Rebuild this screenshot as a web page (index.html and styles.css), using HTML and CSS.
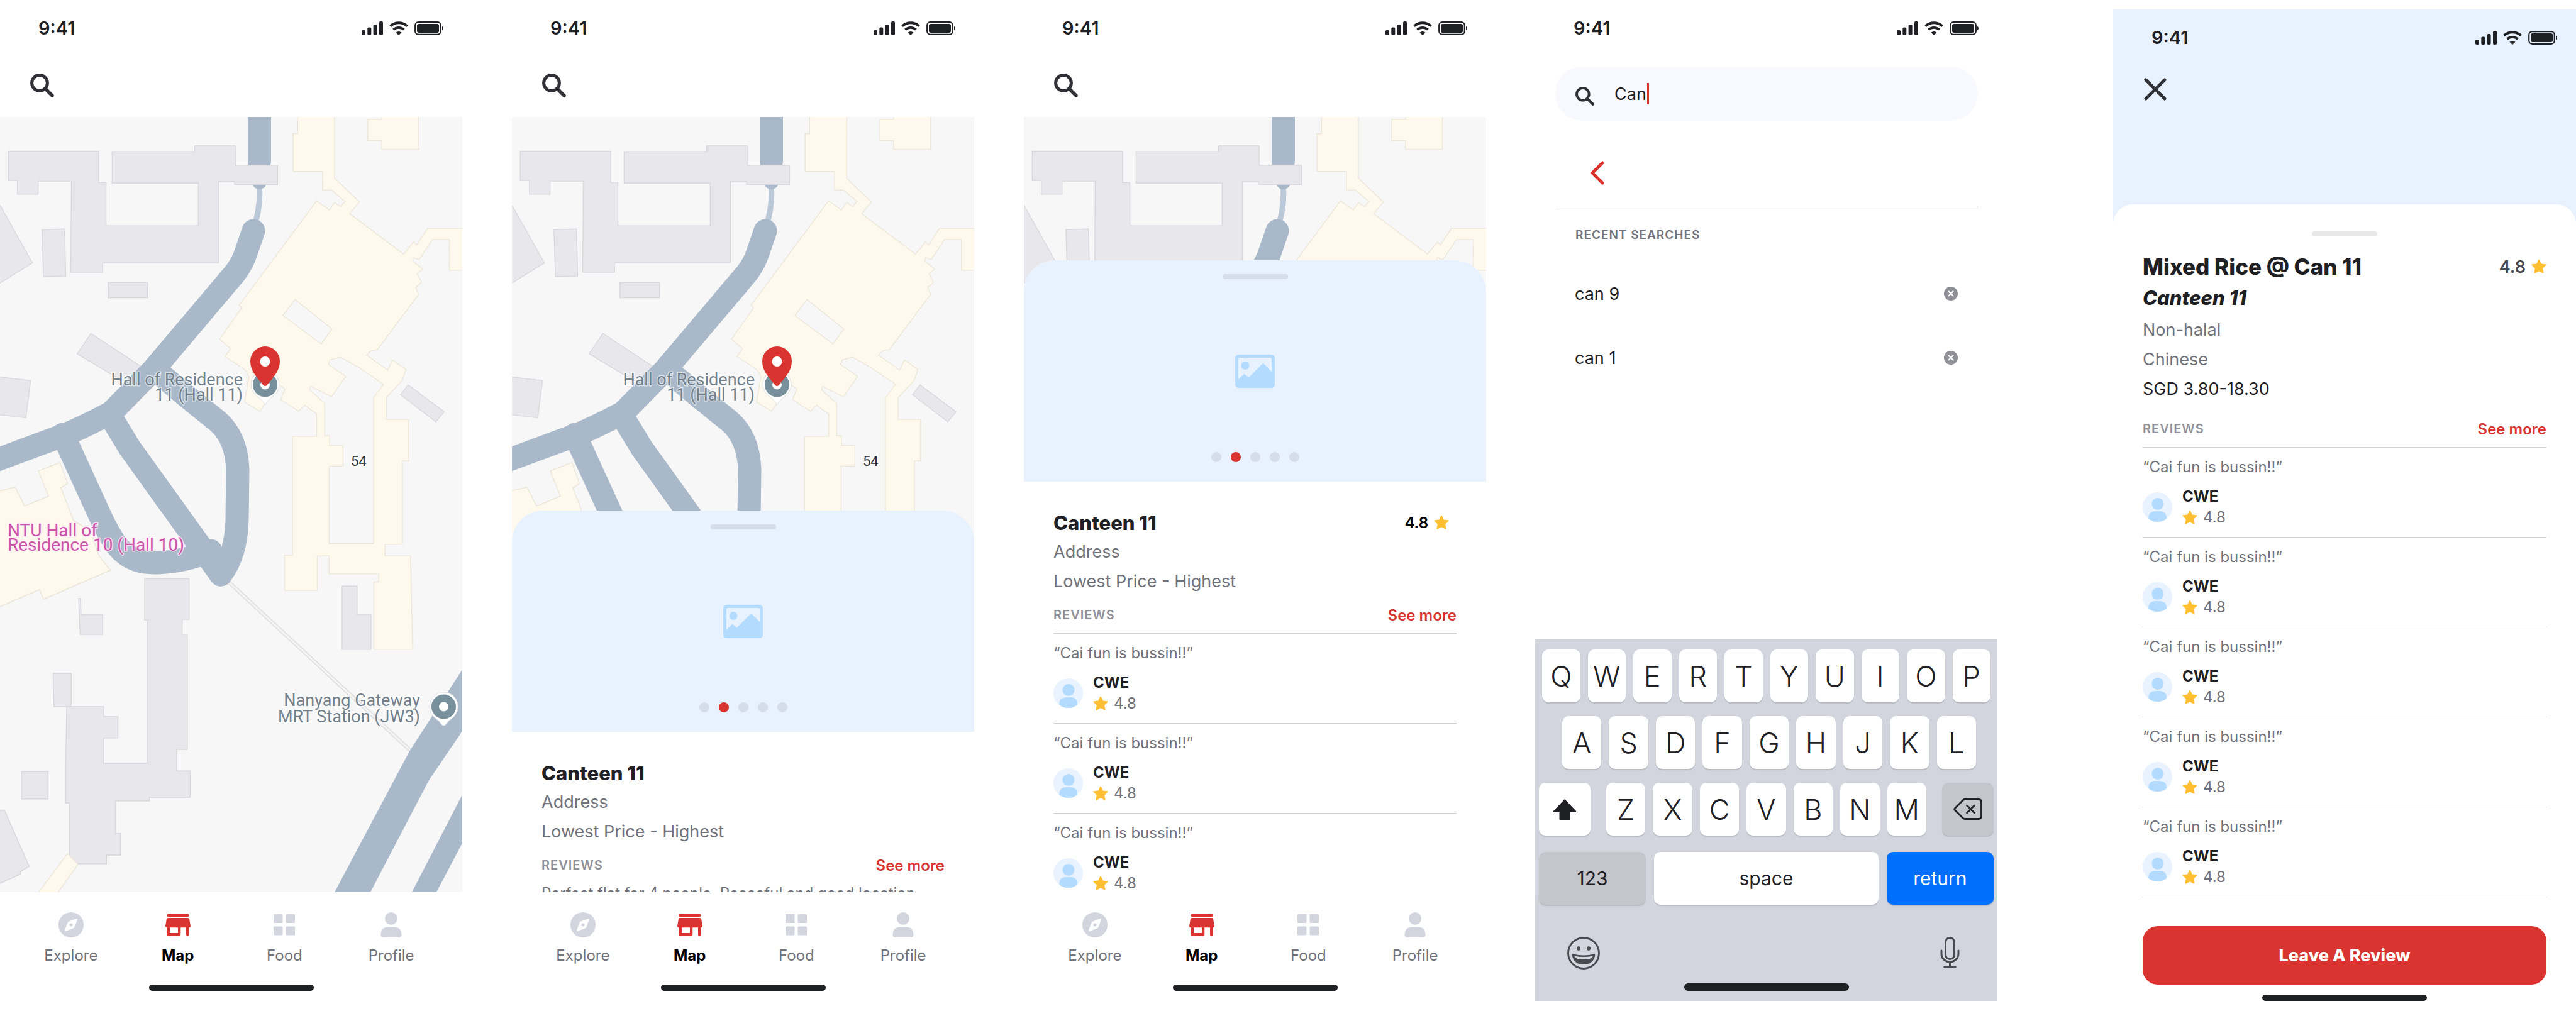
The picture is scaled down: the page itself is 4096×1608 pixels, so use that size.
FILE: index.html
```html
<!DOCTYPE html>
<html lang="en">
<head>
<meta charset="utf-8">
<title>Canteen finder – screens</title>
<link rel="stylesheet" href="styles.css">
</head>
<body>
<svg class="defs" aria-hidden="true">
  <symbol id="i-signal" viewBox="0 0 34 22"><rect x="0" y="14" width="6" height="8" rx="2"/><rect x="9.300000" y="9.500000" width="6" height="12.500000" rx="2"/><rect x="18.600000" y="5" width="6" height="17" rx="2"/><rect x="28" y="0" width="6" height="22" rx="2"/></symbol>
  <symbol id="i-wifi" viewBox="0 0 30 22"><path d="M1.500000 7.500000A20 20 0 0 1 28.500000 7.500000M6.500000 13.200000A12.500000 12.500000 0 0 1 23.500000 13.200000" fill="none" stroke="currentColor" stroke-width="3.800000"/><path d="M15 22l-4.500000-4.200000a6.500000 6.500000 0 0 1 9 0z"/></symbol>
  <symbol id="i-battery" viewBox="0 0 48 22"><rect x="1.200000" y="1.200000" width="40.600000" height="19.600000" rx="5" fill="none" stroke="currentColor" stroke-width="2.200000"/><rect x="4" y="4" width="35" height="14" rx="3"/><path d="M44 7.500000q4 3.500000 0 7z"/></symbol>
  <symbol id="i-search" viewBox="0 0 38 38"><circle cx="15" cy="15" r="12.400000" fill="none" stroke="currentColor" stroke-width="5"/><path d="M24 24L35 35" stroke="currentColor" stroke-width="5.500000" stroke-linecap="round"/></symbol>
  <symbol id="i-star" viewBox="0 0 24 24"><path d="M11 1.500000q1-1.600000 2 0l2.700000 6 6.700000.8q1.800000.4.7 1.800000l-4.900000 4.600000 1.300000 6.600000q.1 1.900000-1.600000 1.200000L12 19.200000l-5.900000 3.300000q-1.700000.7-1.600000-1.200000l1.300000-6.600000L.9 10.100000q-1.100000-1.400000.7-1.800000l6.700000-.8z"/></symbol>
  <symbol id="i-compass" viewBox="0 0 40 40"><path fill-rule="evenodd" d="M20 0a20 20 0 1 1 0 40a20 20 0 1 1 0-40zM28.500000 10L16.500000 14.500000Q15 15 14.500000 16.500000L10 28.500000Q9.600000 30.400000 11.500000 30L23.500000 25.500000Q25 25 25.500000 23.500000L30 11.500000Q30.400000 9.600000 28.500000 10zM20 17.400000a2.600000 2.600000 0 1 1 0 5.200000a2.600000 2.600000 0 1 1 0-5.200000z"/></symbol>
  <symbol id="i-store" viewBox="0 0 40 40"><rect x="2.500000" y="2.500000" width="35" height="4.500000" rx="2"/><path fill-rule="evenodd" d="M4 9H36Q37.500000 9 38 10.500000L40 22Q40 24.300000 37.500000 24.300000V35.500000Q37.500000 37.500000 35.300000 37.500000T33 35.500000V24.300000H24.300000V35.500000Q24.300000 37.500000 22.300000 37.500000H5Q2.500000 37.500000 2.500000 35V24.300000Q0 24.300000 0 22L2 10.500000Q2.500000 9 4 9zM7 24.300000V33H20V24.300000z"/></symbol>
  <symbol id="i-grid" viewBox="0 0 40 40"><rect x="3" y="3" width="14.500000" height="14" rx="1.500000"/><rect x="22.500000" y="3" width="14.500000" height="14" rx="1.500000"/><rect x="3" y="22.500000" width="14.500000" height="14" rx="1.500000"/><rect x="22.500000" y="22.500000" width="14.500000" height="14" rx="1.500000"/></symbol>
  <symbol id="i-person" viewBox="0 0 40 40"><circle cx="20" cy="10" r="10"/><path d="M14 23.500000H26Q36.500000 24.500000 36.500000 35Q36.500000 40 32 40H8Q3.500000 40 3.500000 35Q3.500000 24.500000 14 23.500000z"/></symbol>
  <symbol id="i-picture" viewBox="0 0 63 53"><path fill-rule="evenodd" d="M6 0H57Q63 0 63 6V47Q63 53 57 53H6Q0 53 0 47V6Q0 0 6 0zM7 5Q5 5 5 7V39.500000L14.500000 30.500000L21.500000 36.500000L44.500000 13.500000L58 27V7Q58 5 56 5z"/><circle cx="16" cy="17.500000" r="6.500000"/></symbol>
  <symbol id="i-avatar" viewBox="0 0 47 47"><circle cx="23.500000" cy="23.500000" r="23.500000" fill="#e9f2ff"/><circle cx="24" cy="18.500000" r="9.500000" fill="#b3daff"/><path d="M9.300000 42V40Q10 30 20 30H28Q38 31 38 40V42Q32 47 23.500000 47T9.300000 42z" fill="#b3daff"/></symbol>
  <symbol id="i-clear" viewBox="0 0 22 22"><circle cx="11" cy="11" r="11" fill="#8f9098"/><path d="M7.500000 7.500000l7 7m0-7l-7 7" stroke="#fff" stroke-width="2.200000" stroke-linecap="round"/></symbol>

  <symbol id="campus-map" viewBox="0 0 735 1233" preserveAspectRatio="xMidYMin slice">
    <rect width="735" height="1233" fill="#f7f7f7"/>
    <g transform="translate(0 -186) scale(.47717 .45015)" fill="#e8e8ec" stroke="#d8d8de" stroke-width="3">
      <path d="M0 725L108 929L0 1000M0 1332L102 1345L86 1476L0 1466"/>
      <path d="M140 812L215 809L219 975L145 977zM360 998H492V1052H360zM303 1178L470 1295L420 1350L370 1322L257 1250zM1360 1360L1480 1455L1452 1490L1335 1395z"/>
      <g fill="#fef9ec" stroke="#ece7da">
        <path fill-rule="evenodd" d="M992 400H1115V630L1198 714L1165 755L1345 898L1378 855L1388 866L1425 807H1560V955H1498V846H1442L1396 918L1378 910L1375 922L1408 950L1390 967L1405 998L1385 1015L1395 1040L1258 1235L1235 1240L1222 1255L1292 1308L1308 1272L1353 1305L1340 1345L1287 1405V1482H1362V1629H1341V1923H1283V1964H1368L1375 2294H1246V2056H1262V2028H1097V1964H1057V2086H948V1962H975V1542H1055V1462L1015 1432L995 1453L935 1412L950 1375L930 1360L865 1453L815 1420L830 1330L815 1305L750 1260L768 1232L732 1198L805 1088L797 1078L1055 710L1098 742L1115 715L1135 730L1150 712L1105 672H1075V606H977V472H992zM1278 1358L1195 1298L1135 1262L1100 1272L1095 1288L1152 1330L1105 1402L1035 1365L1032 1378L1082 1425V1540H1098V1574H1143V1647H1097V1921H1245V1405zM983 1058L1106 1162L1070 1215L943 1115z"/>
        <path d="M1226 422H1272V400H1395V528H1272V497H1226z"/>
      </g>
    </g>
    <g transform="translate(0 519.800000) scale(.47717 .57531)" fill="#e8e8ec" stroke="#d8d8de" stroke-width="3">
      <path d="M482 373H630V485H607V527H624V845H589V905H634V977H498V987H385V1078H401V1137H355V1161H231V993H219V905L222 727H345V755H393V813H345V883H490V487H482zM177 635H237V727H180zM262 428H268L270 472H342V527H267zM72 906H160V982H72zM-5 1013H15L97 1168L68 1183V1190L-5 1217zM1140 394H1190V471H1236V568H1140z"/>
      <path fill="#fef9ec" stroke="#ece7da" d="M-5 131L50 120L82 172L162 145L128 75L200 52L225 110L203 122L245 212L300 240L330 310L368 350L145 430L132 403L-5 452zM120 1250L225 1133L260 1163L185 1250z"/>
    </g>
    <path d="M365 741L654 1009" stroke="#dedede" stroke-width="6"/><path d="M365 741L654 1009" stroke="#f4f4f4" stroke-width="3"/>
    <path d="M412 108Q415 135 407 165" fill="none" stroke="#bac8d7" stroke-width="9"/>
    <g fill="none" stroke="#a9b9ca" stroke-width="37" stroke-linecap="round" stroke-linejoin="round">
      <path d="M412.500000-20V70"/>
      <path d="M403 181L391 216Q386 232 374 248L243 403L177 470Q120 500 91 510L-20 551"/>
      <path d="M250 405L300 447L346 484Q376 510 378 560L377 640Q376 695 351 728"/>
      <path d="M178 480L206 526L351 728"/>
      <path d="M100 505L158 632Q180 680 197 693Q215 709 245 709Q290 709 335 690"/>
    </g>
    <path d="M401 107h23q-4 8-11.500000 8t-11.500000-8zM735 879L651 1009L532 1233H589L682 1055L735 977zM735 1078L655 1233H694L735 1155z" fill="#a9b9ca"/>
    <path transform="translate(0 -186) scale(.47717 .45015)" d="M28 534H329V645H353V798H661V647H374V536H649V515H784V584H925V652H782V642H728V929H342V962H236L238 640H127V686H58V638H28z" fill="#e8e8ec" stroke="#d8d8de" stroke-width="3"/>
    <g fill="#fff"><path d="M421.500000 403a22.500000 22.500000 0 0 1 22.500000 23q0 12-12 20-7 5-10.500000 12-3.500000-7-10.500000-12-12-8-12-20a22.500000 22.500000 0 0 1 22.500000-23z" stroke="#dfe0e2"/><path d="M705.500000 915a22.500000 22.500000 0 0 1 22.500000 23q0 12-10 19-6 4-8 8-4.500000 6-9 0-2-4-8-8-10-7-10-19a22.500000 22.500000 0 0 1 22.500000-23z" stroke="#dfe4e8"/></g>
    <g fill="#fff" stroke="#78909c" stroke-width="12"><circle cx="421.500000" cy="426" r="13.500000"/><circle cx="705.500000" cy="938" r="13.500000"/></g>
    <path fill="#d9342f" d="M421.500000 365a23.500000 23.500000 0 0 1 23.500000 23.500000C445 403 436 413 424.500000 426.500000q-3 3-6 0C407 413 398 403 398 388.500000a23.500000 23.500000 0 0 1 23.500000-23.500000z"/>
    <circle cx="421.500000" cy="389" r="8" fill="#fff"/>
    <g class="map-text">
      <g class="map-place" text-anchor="end"><text x="386" y="427">Hall of Residence</text><text x="386" y="451">11 (Hall 11)</text><text x="668" y="937">Nanyang Gateway</text><text x="668" y="963">MRT Station (JW3)</text></g>
      <g class="map-hall"><text x="12" y="667">NTU Hall of</text><text x="12" y="690">Residence 10 (Hall 10)</text></g>
      <text class="map-number" x="558" y="555">54</text>
    </g>
  </symbol>
</svg>

<main class="board">
  <section class="phone" aria-label="Map">
    <div class="status"><span>9:41</span><span class="status-icons"><svg class="signal"><use href="#i-signal"/></svg><svg class="wifi"><use href="#i-wifi"/></svg><svg class="battery"><use href="#i-battery"/></svg></span></div>
    <div class="toolbar"><button class="icon-button" aria-label="Search"><svg><use href="#i-search"/></svg></button></div>
    <div class="stage"><svg class="map" viewBox="0 0 735 1233"><use href="#campus-map"/></svg></div>
    <nav class="tabs">
      <a href="#explore"><svg><use href="#i-compass"/></svg>Explore</a>
      <a href="#map" class="current"><svg><use href="#i-store"/></svg>Map</a>
      <a href="#food"><svg><use href="#i-grid"/></svg>Food</a>
      <a href="#profile"><svg><use href="#i-person"/></svg>Profile</a>
    </nav>
    <div class="home-bar"></div>
  </section>

  <section class="phone" aria-label="Map with preview">
    <div class="status"><span>9:41</span><span class="status-icons"><svg class="signal"><use href="#i-signal"/></svg><svg class="wifi"><use href="#i-wifi"/></svg><svg class="battery"><use href="#i-battery"/></svg></span></div>
    <div class="toolbar"><button class="icon-button" aria-label="Search"><svg><use href="#i-search"/></svg></button></div>
    <div class="stage">
      <svg class="map" viewBox="0 0 735 1233"><use href="#campus-map"/></svg>
      <article class="sheet sheet-low">
        <div class="hero"><span class="handle"></span><svg class="picture"><use href="#i-picture"/></svg><div class="dots"><i></i><i class="on"></i><i></i><i></i><i></i></div></div>
        <div class="details">
          <div class="title-row"><h2>Canteen 11</h2></div>
          <p class="fact">Address</p>
          <p class="fact">Lowest Price - Highest</p>
          <div class="reviews-head no-rule"><h3>Reviews</h3><a href="#reviews">See more</a></div>
          <p class="quote">Perfect flat for 4 people. Peaceful and good location.</p>
        </div>
      </article>
    </div>
    <nav class="tabs">
      <a href="#explore"><svg><use href="#i-compass"/></svg>Explore</a>
      <a href="#map" class="current"><svg><use href="#i-store"/></svg>Map</a>
      <a href="#food"><svg><use href="#i-grid"/></svg>Food</a>
      <a href="#profile"><svg><use href="#i-person"/></svg>Profile</a>
    </nav>
    <div class="home-bar"></div>
  </section>

  <section class="phone" aria-label="Canteen details">
    <div class="status"><span>9:41</span><span class="status-icons"><svg class="signal"><use href="#i-signal"/></svg><svg class="wifi"><use href="#i-wifi"/></svg><svg class="battery"><use href="#i-battery"/></svg></span></div>
    <div class="toolbar"><button class="icon-button" aria-label="Search"><svg><use href="#i-search"/></svg></button></div>
    <div class="stage">
      <svg class="map" viewBox="0 0 735 1233"><use href="#campus-map"/></svg>
      <article class="sheet sheet-high">
        <div class="hero"><span class="handle"></span><svg class="picture"><use href="#i-picture"/></svg><div class="dots"><i></i><i class="on"></i><i></i><i></i><i></i></div></div>
        <div class="details">
          <div class="title-row"><h2>Canteen 11</h2><span class="score inset">4.8<svg class="star"><use href="#i-star"/></svg></span></div>
          <p class="fact">Address</p>
          <p class="fact">Lowest Price - Highest</p>
          <div class="reviews-head"><h3>Reviews</h3><a href="#reviews">See more</a></div>
          <ul class="reviews">
            <li><p class="quote">“Cai fun is bussin!!”</p><div class="reviewer"><svg class="avatar"><use href="#i-avatar"/></svg><div><b>CWE</b><span><svg class="star"><use href="#i-star"/></svg>4.8</span></div></div></li>
            <li><p class="quote">“Cai fun is bussin!!”</p><div class="reviewer"><svg class="avatar"><use href="#i-avatar"/></svg><div><b>CWE</b><span><svg class="star"><use href="#i-star"/></svg>4.8</span></div></div></li>
            <li><p class="quote">“Cai fun is bussin!!”</p><div class="reviewer"><svg class="avatar"><use href="#i-avatar"/></svg><div><b>CWE</b><span><svg class="star"><use href="#i-star"/></svg>4.8</span></div></div></li>
          </ul>
        </div>
      </article>
    </div>
    <nav class="tabs">
      <a href="#explore"><svg><use href="#i-compass"/></svg>Explore</a>
      <a href="#map" class="current"><svg><use href="#i-store"/></svg>Map</a>
      <a href="#food"><svg><use href="#i-grid"/></svg>Food</a>
      <a href="#profile"><svg><use href="#i-person"/></svg>Profile</a>
    </nav>
    <div class="home-bar"></div>
  </section>

  <section class="phone search-phone" aria-label="Search">
    <div class="status"><span>9:41</span><span class="status-icons"><svg class="signal"><use href="#i-signal"/></svg><svg class="wifi"><use href="#i-wifi"/></svg><svg class="battery"><use href="#i-battery"/></svg></span></div>
    <label class="search-field"><svg><use href="#i-search"/></svg><input type="text" value="Can" aria-label="Search"><span class="caret"></span></label>
    <div class="back-row"><button class="back" aria-label="Back"><svg viewBox="0 0 24 38"><path d="M21 3L5 19L21 35" fill="none" stroke="currentColor" stroke-width="5" stroke-linecap="round"/></svg></button></div>
    <h3 class="recent-title">Recent searches</h3>
    <ul class="recent">
      <li>can 9<button class="clear" aria-label="Remove can 9"><svg><use href="#i-clear"/></svg></button></li>
      <li>can 1<button class="clear" aria-label="Remove can 1"><svg><use href="#i-clear"/></svg></button></li>
    </ul>
    <div class="keyboard">
      <div class="keys keys-top"><button>Q</button><button>W</button><button>E</button><button>R</button><button>T</button><button>Y</button><button>U</button><button>I</button><button>O</button><button>P</button></div>
      <div class="keys keys-home"><button>A</button><button>S</button><button>D</button><button>F</button><button>G</button><button>H</button><button>J</button><button>K</button><button>L</button></div>
      <div class="keys-shift">
        <button aria-label="Shift"><svg class="shift" viewBox="0 0 38 33"><path d="M19 0L37 19Q38 21 36 21H27.500000V32Q27.500000 33 26.500000 33H11.500000Q10.500000 33 10.500000 32V21H2Q0 21 1 19z"/></svg></button>
        <div class="keys"><button>Z</button><button>X</button><button>C</button><button>V</button><button>B</button><button>N</button><button>M</button></div>
        <button class="dim" aria-label="Delete"><svg class="erase" viewBox="0 0 46 34" fill="none" stroke="currentColor" stroke-width="2.800000" stroke-linecap="round" stroke-linejoin="round"><path d="M18 1.500000H40Q44.500000 1.500000 44.500000 6V28Q44.500000 32.500000 40 32.500000H18Q16.500000 32.500000 15.500000 31.500000L2.500000 18.500000Q1 17 2.500000 15.500000L15.500000 2.500000Q16.500000 1.500000 18 1.500000zM21.500000 11L33.500000 23M33.500000 11L21.500000 23"/></svg></button>
      </div>
      <div class="keys-space"><button class="dim">123</button><button>space</button><button class="return">return</button></div>
      <div class="keyboard-foot">
        <svg class="emoji" viewBox="0 0 52 52"><circle cx="26" cy="26" r="24.500000" fill="none" stroke="currentColor" stroke-width="2.800000"/><ellipse cx="18" cy="18.500000" rx="3" ry="3.300000"/><ellipse cx="34" cy="18.500000" rx="3" ry="3.300000"/><path fill-rule="evenodd" d="M9.500000 27.500000Q26 31.500000 42.500000 27.500000Q44.500000 27.200000 44.300000 29Q42 44 26 44T7.700000 29Q7.500000 27.200000 9.500000 27.500000zM11 30.500000Q12.500000 36 26 36T41 30.500000Q26 33.500000 11 30.500000z"/></svg>
        <svg class="mic" viewBox="0 0 30 50" fill="none" stroke="currentColor" stroke-width="3" stroke-linecap="round"><rect x="8" y="1.500000" width="14" height="34" rx="7"/><path d="M1.500000 22V27A13.500000 13 0 0 0 28.500000 27V22M15 40V47"/><path d="M6.500000 47.800000H23.500000" stroke-width="3.600000"/></svg>
      </div>
      <div class="home-bar"></div>
    </div>
  </section>

  <section class="phone dish-phone" aria-label="Dish details">
    <div class="status"><span>9:41</span><span class="status-icons"><svg class="signal"><use href="#i-signal"/></svg><svg class="wifi"><use href="#i-wifi"/></svg><svg class="battery"><use href="#i-battery"/></svg></span></div>
    <div class="close-row"><button class="icon-button" aria-label="Close"><svg viewBox="0 0 36 36"><path d="M3 3L33 33M33 3L3 33" stroke="currentColor" stroke-width="5" stroke-linecap="round"/></svg></button></div>
    <article class="dish">
      <span class="handle"></span>
      <div class="title-row"><h1>Mixed Rice @ Can 11</h1><span class="score soft">4.8<svg class="star"><use href="#i-star"/></svg></span></div>
      <h2 class="place">Canteen 11</h2>
      <p class="fact">Non-halal</p>
      <p class="fact">Chinese</p>
      <p class="fact price">SGD 3.80-18.30</p>
      <div class="reviews-head"><h3>Reviews</h3><a href="#reviews">See more</a></div>
      <ul class="reviews">
        <li><p class="quote">“Cai fun is bussin!!”</p><div class="reviewer"><svg class="avatar"><use href="#i-avatar"/></svg><div><b>CWE</b><span><svg class="star"><use href="#i-star"/></svg>4.8</span></div></div></li>
        <li><p class="quote">“Cai fun is bussin!!”</p><div class="reviewer"><svg class="avatar"><use href="#i-avatar"/></svg><div><b>CWE</b><span><svg class="star"><use href="#i-star"/></svg>4.8</span></div></div></li>
        <li><p class="quote">“Cai fun is bussin!!”</p><div class="reviewer"><svg class="avatar"><use href="#i-avatar"/></svg><div><b>CWE</b><span><svg class="star"><use href="#i-star"/></svg>4.8</span></div></div></li>
        <li><p class="quote">“Cai fun is bussin!!”</p><div class="reviewer"><svg class="avatar"><use href="#i-avatar"/></svg><div><b>CWE</b><span><svg class="star"><use href="#i-star"/></svg>4.8</span></div></div></li>
        <li><p class="quote">“Cai fun is bussin!!”</p><div class="reviewer"><svg class="avatar"><use href="#i-avatar"/></svg><div><b>CWE</b><span><svg class="star"><use href="#i-star"/></svg>4.8</span></div></div></li>
      </ul>
      <button class="cta">Leave A Review</button>
      <div class="home-bar"></div>
    </article>
  </section>
</main>
</body>
</html>
```
FILE: styles.css
```css
* { box-sizing: border-box; }
body { margin: 0; background: #fff; color: #1f2024; font-family: Inter, "Liberation Sans", sans-serif; }
h1, h2, h3, p, ul { margin: 0; padding: 0; }
ul { list-style: none; }
a { color: inherit; text-decoration: none; }
button { padding: 0; border: 0; background: none; color: inherit; font: inherit; }
svg { display: block; flex: none; fill: currentColor; }
.defs { position: absolute; width: 0; height: 0; }

.board { display: grid; grid-template-columns: 735fr 79fr 735fr 79fr 735fr 78fr 735fr 184fr 736fr; }
.phone { display: flex; flex-direction: column; min-width: 0; }
.phone:nth-child(2) { grid-column: 3; }
.phone:nth-child(3) { grid-column: 5; }
.phone:nth-child(4) { grid-column: 7; }
.phone:nth-child(5) { grid-column: 9; }

/* status bar and toolbar */
.status { display: flex; justify-content: space-between; align-items: center; height: 89px; padding: 0 28px 0 61px; font-size: 29px; font-weight: 600; }
.status-icons { display: flex; align-items: center; gap: 10px; }
.signal { width: 34px; height: 22px; }
.wifi { width: 30px; height: 22px; }
.battery { width: 48px; height: 22px; }
.toolbar { padding: 28px 48px 31px; }
.icon-button { display: block; color: #2f3036; }
.icon-button svg { width: 38px; height: 38px; }

/* map and its labels */
.stage { position: relative; overflow: hidden; }
.map { width: 100%; height: auto; }
.map-text { font-family: Roboto, sans-serif; font-size: 27px; paint-order: stroke; stroke: #ffffff90; stroke-width: 3px; }
.map-place { fill: #72818b; font-weight: 400; }
.map-hall { fill: #cc55aa; stroke: #ffe9f8d0; font-size: 28px; }
.map-number { fill: #26282b; font-size: 22px; }

/* bottom sheet */
.sheet { position: absolute; left: 0; right: 0; bottom: 0; overflow: hidden; border-radius: 50px 50px 0 0; background: #fff; }
.sheet-low { top: 626px; }
.sheet-high { top: 228px; }
.hero { display: flex; flex-direction: column; align-items: center; justify-content: space-between; height: 352px; padding: 22px 0 31px; background: #e8f2ff; }
.handle { width: 104px; height: 8px; border-radius: 4px; background: #d4dde9; }
.picture { width: 63px; height: 53px; margin-top: 18px; color: #b3daff; }
.dots { display: flex; gap: 15px; }
.dots i { width: 16px; height: 16px; border-radius: 50%; background: #d4dde9; }
.dots .on { background: #d9342f; }
.details { padding: 42px 47px 0; }
.title-row { display: flex; justify-content: space-between; align-items: center; height: 46px; }
h2 { font-size: 31px; font-weight: 800; }
h1 { font-size: 35px; font-weight: 800; }
.score { display: flex; align-items: center; gap: 9px; color: #000; font-size: 24px; font-weight: 600; }
.inset { padding-right: 12px; }
.soft { color: #494a50; font-size: 27px; }
.star { width: 24px; height: 24px; color: #ffbf31; }
.fact { color: #71727a; font-size: 27px; line-height: 47px; }
.price { color: #1f2024; }
.reviews-head { display: flex; justify-content: space-between; align-items: center; height: 60px; padding: 13px 0 12px; border-bottom: 1px solid #d0d2d9; }
.no-rule { border-color: transparent; }
h3 { color: #8f9098; font-size: 20px; font-weight: 600; letter-spacing: 1px; text-transform: uppercase; }
.reviews-head a { color: #d9342f; font-size: 24px; font-weight: 600; }
.quote { color: #71727a; font-size: 24px; line-height: 29px; white-space: nowrap; }
.reviews li { padding: 16px 0 15px; border-bottom: 1px solid #d0d2d9; }
.reviewer { display: flex; align-items: center; gap: 16px; margin-top: 16px; font-size: 24px; line-height: 33px; }
.avatar { width: 47px; height: 47px; }
.reviewer b { display: block; font-weight: 700; }
.reviewer span { display: flex; align-items: center; gap: 9px; color: #71727a; }

/* tab bar */
.tabs { display: grid; grid-template-columns: repeat(4, 1fr); padding: 32px 28px 0; }
.tabs a { display: flex; flex-direction: column; align-items: center; gap: 15px; color: #71727a; font-size: 24px; line-height: 28px; }
.tabs svg { width: 40px; height: 40px; color: #d2d5dd; }
.tabs .current { color: #000; font-weight: 700; }
.tabs .current svg { color: #d9342f; }
.home-bar { flex: none; width: 262px; height: 10px; margin: 32px auto 16px; border-radius: 5px; background: #1f2024; }

/* search screen */
.search-phone { padding-bottom: 16px; }
.search-field { display: flex; align-items: center; height: 86px; margin: 17px 31px 0 32px; padding-left: 32px; border-radius: 43px; background: #f8f9fe; color: #2f3036; }
.search-field svg { width: 30px; height: 30px; margin-top: 8px; }
.search-field input { width: 52px; margin: 0 0 0 32px; padding: 0; border: 0; outline: 0; background: none; color: #1f2024; font: 400 27px Inter, sans-serif; }
.caret { width: 3px; height: 34px; background: #d9342f; }
.back-row { margin: 0 31px 0 32px; padding: 64px 54px 35px; border-bottom: 1px solid #d0d2d9; }
.back { display: block; color: #d9342f; }
.back svg { width: 24px; height: 38px; }
.recent-title { padding: 30px 64px 0; color: #71727a; font-size: 19px; line-height: 28px; }
.recent { padding: 28px 63px 0; }
.recent li { display: flex; justify-content: space-between; align-items: center; height: 102px; font-size: 27px; }
.clear svg { width: 22px; height: 22px; }

.keyboard { display: flex; flex-direction: column; gap: 22px; margin-top: auto; padding-top: 16px; background: #d2d5dd; }
.keys { display: grid; grid-auto-flow: column; grid-auto-columns: 1fr; gap: 12px; }
.keys-top { padding: 0 11px; }
.keys-home { padding: 0 34px 0 43px; }
.keyboard button { display: grid; place-items: center; height: 84px; border-radius: 10px; background: #fff; box-shadow: 0 2px 1px #b9bbc2; font-size: 30px; }
.keyboard .keys button { font-size: 45px; font-weight: 300; }
.keys-shift { display: grid; grid-template-columns: 82fr 510fr 82fr; gap: 25px; padding: 0 6px; }
.keys-space { display: grid; grid-template-columns: 170fr 356fr 170fr; gap: 13px; margin-top: 4px; padding: 0 6px; }
.keyboard .dim { background: #c5c6cc; }
.keyboard .return { background: #006ffd; color: #fff; }
.shift { width: 38px; height: 33px; }
.erase { width: 46px; height: 34px; }
.erase, .mic { fill: none; }
.keyboard-foot { display: flex; justify-content: space-between; padding: 29px 60px 0 51px; color: #494a50; }
.emoji { width: 52px; height: 52px; }
.mic { width: 31px; height: 50px; }
.keyboard .home-bar { height: 12px; margin-top: 0; border-radius: 6px; }

/* dish screen */
.dish-phone { margin-top: 15px; background: #e8f2ff; }
.close-row { padding: 20px 49px; }
.close-row .icon-button svg { width: 36px; height: 36px; }
.dish { display: flex; flex-direction: column; margin-top: 145px; padding: 43px 47px 0; border-radius: 32px 32px 0 0; background: #fff; }
.dish .handle { align-self: center; margin-bottom: 25px; background: #e8e8e8; }
.place { font-style: italic; line-height: 54px; }
.dish .reviews-head { height: 70px; padding-top: 23px; }
.cta { height: 93px; margin-top: 46px; border-radius: 24px; background: #d9342f; color: #fff; font-size: 27px; font-weight: 800; }
.dish .home-bar { margin-top: 16px; }
```
